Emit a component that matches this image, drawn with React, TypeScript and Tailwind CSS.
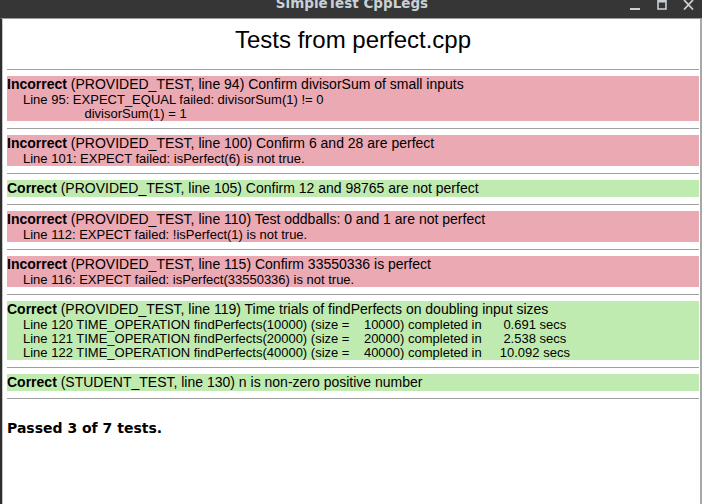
import React from "react";

type Result = {
  ok: boolean;
  title: string;
  lines?: string[];
};

const RESULTS: Result[] = [
  {
    ok: false,
    title: "(PROVIDED_TEST, line 94) Confirm divisorSum of small inputs",
    lines: ["Line 95: EXPECT_EQUAL failed: divisorSum(1) != 0", "                 divisorSum(1) = 1"],
  },
  {
    ok: false,
    title: "(PROVIDED_TEST, line 100) Confirm 6 and 28 are perfect",
    lines: ["Line 101: EXPECT failed: isPerfect(6) is not true."],
  },
  { ok: true, title: "(PROVIDED_TEST, line 105) Confirm 12 and 98765 are not perfect" },
  {
    ok: false,
    title: "(PROVIDED_TEST, line 110) Test oddballs: 0 and 1 are not perfect",
    lines: ["Line 112: EXPECT failed: !isPerfect(1) is not true."],
  },
  {
    ok: false,
    title: "(PROVIDED_TEST, line 115) Confirm 33550336 is perfect",
    lines: ["Line 116: EXPECT failed: isPerfect(33550336) is not true."],
  },
  {
    ok: true,
    title: "(PROVIDED_TEST, line 119) Time trials of findPerfects on doubling input sizes",
    lines: [
      "Line 120 TIME_OPERATION findPerfects(10000) (size =    10000) completed in      0.691 secs",
      "Line 121 TIME_OPERATION findPerfects(20000) (size =    20000) completed in      2.538 secs",
      "Line 122 TIME_OPERATION findPerfects(40000) (size =    40000) completed in     10.092 secs",
    ],
  },
  { ok: true, title: "(STUDENT_TEST, line 130) n is non-zero positive number" },
];

function TitleBar() {
  return (
    <div className="h-[18px] bg-[#363636] flex items-start justify-center relative overflow-hidden">
      <span className="-mt-[5px] ml-[2px] text-[13.5px] leading-[16px] font-bold text-[#c9d0d6] font-['DejaVu_Sans',sans-serif]">
        SimpleTest CppLegs
      </span>
      {/* window buttons */}
      <div className="absolute right-[8px] top-0 flex items-start gap-[16px] text-[#c9d0d6]">
        <svg width="11" height="10" viewBox="0 0 11 10">
          <rect x="0" y="8" width="10" height="2" fill="currentColor" />
        </svg>
        <svg width="10" height="10" viewBox="0 0 10 10">
          <rect x="1" y="0.5" width="8" height="8.5" fill="none" stroke="currentColor" strokeWidth="1.6" />
          <rect x="1" y="0" width="8" height="2.5" fill="currentColor" />
        </svg>
        <svg width="11" height="10" viewBox="0 0 11 10">
          <path d="M1 0 L10 9.5 M10 0 L1 9.5" stroke="currentColor" strokeWidth="1.8" />
        </svg>
      </div>
    </div>
  );
}

function ResultBox({ r }: { r: Result }) {
  return (
    <div className={`mt-[6px] mb-[7px] ${r.ok ? "bg-[#c0ebb0]" : "bg-[#eba9b4]"}`}>
      <div className="text-[14px] leading-[17px] text-black">
        <b>{r.ok ? "Correct" : "Incorrect"}</b> {r.title}
      </div>
      {r.lines?.map((l, i) => (
        <div key={i} className="pl-[16px] text-[13px] leading-[14px] text-black whitespace-pre">
          {l}
        </div>
      ))}
    </div>
  );
}

export default function App() {
  return (
    <div className="w-[702px] h-[504px] bg-white flex flex-col overflow-hidden font-['Liberation_Sans',Arial,sans-serif]">
      <TitleBar />
      <div className="flex-1 border-t border-t-[#9c9c9c] border-l-2 border-l-[#2e2e2e] border-r-2 border-r-[#a8a8a8] pl-[5px] pr-[1px]">
        <div className="flex border-l border-l-[#c8c8c8] -ml-[5px] pl-[4px] h-full flex-col">
          <h1 className="mt-[7px] text-center text-[24px] leading-[28px] text-black">Tests from perfect.cpp</h1>
          <div className="mt-[15px] h-px bg-[#a0a0a0]" />
          {RESULTS.map((r, i) => (
            <React.Fragment key={i}>
              <ResultBox r={r} />
              <div className="h-px bg-[#a0a0a0]" />
            </React.Fragment>
          ))}
          <div className="mt-[21px] text-[14px] leading-[16px] font-bold text-black font-['DejaVu_Sans',sans-serif]">
            Passed 3 of 7 tests.
          </div>
        </div>
      </div>
    </div>
  );
}
